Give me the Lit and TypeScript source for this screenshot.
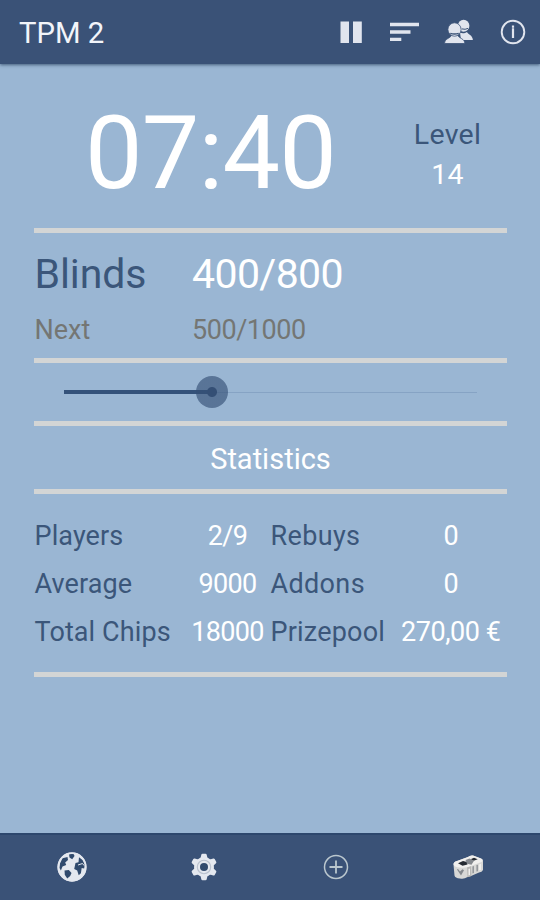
import { LitElement, html, css, svg } from "lit";
import { customElement, property } from "lit/decorators.js";

const icons = {
  pause: svg`<path fill="#e1e5ee" d="M5.5 5.5h8.500v21.500H5.500zM18 5.500h8.800v21.500H18z"/>`,
  sort: svg`<g fill="#e1e5ee"><path d="M1 6.800h29v3.400H1zM1 14.200h20.500v3.600H1zM1 21.700h11.300v3.400H1z"/></g>`,
  people: svg`
    <g fill="#e1e5ee">
      <ellipse cx="20.600" cy="9.800" rx="5.800" ry="6"/>
      <path d="M17 16.500c2 1 5 .8 7-.6.7 2.600 5.600 2.700 5.900 8.100H18z"/>
    </g>
    <g fill="#e1e5ee" stroke="#3a5277" stroke-width=".8">
      <path d="M1.500 27.500c.3-5 5.600-5.100 7.100-8.200h6c1.500 3.100 7 3.200 7.300 8.200z"/>
      <ellipse cx="11.500" cy="13.500" rx="6.600" ry="6.700"/>
    </g>
    <path d="M7.300 17.300q4.200 1.300 8.400 0" fill="none" stroke="#3a5277" stroke-width="1.400"/>
    <path d="M18.800 12.900q3.500 1 6.200-.5" fill="none" stroke="#3a5277" stroke-width="1"/>`,
  info: svg`<g fill="none" stroke="#e1e5ee">
      <circle cx="16" cy="16" r="11.300" stroke-width="1.900"/>
      <path stroke-width="2.200" d="M16 9.500v2.200M16 12.300v9.700"/>
    </g>`,
  globe: svg`
    <circle cx="16" cy="16" r="14.400" fill="#e4e8ef"/>
    <g fill="#304a6d">
      <path d="M13 3.200l4.500-.7 1 2.500-2.300 3.200-2.700-1.700z"/>
      <path d="M4 12.500l2.500-5.200 5-1.300.5 3-2.800 2.400 1 2.700-3.700 1.300-1.600 4.200L3.500 17z"/>
      <path d="M8.500 19.500l4.300-.6 2.700 3-1.300 3.200-3 2.400-2.400-3.800z"/>
      <path d="M19.500 12l3-.8.500-5 3.500 2.800 2.200 4.500-.5 4-2.500-.5-.8 5.200-2.200 2-1.500-4.800-3-1.400z"/>
    </g>
    <path d="M22 14l4.500-1.500 1.500 2" fill="none" stroke="#e4e8ef" stroke-width="1"/>
    <circle cx="16" cy="16" r="13.800" fill="none" stroke="#e4e8ef" stroke-width="1.700"/>`,
  gear: svg`
    <g fill="#e4e8ef">
      <circle cx="16" cy="16" r="10"/>
      ${[0, 60, 120, 180, 240, 300].map(
        (a) => svg`<path transform="rotate(${a} 16 16)" d="M12.300 8l1-4.300q.2-.9 1.200-.9h3q1 0 1.200.9l1 4.300z"/>`
      )}
    </g>
    <circle cx="16" cy="16" r="6.700" fill="none" stroke="#b9c1ce" stroke-width="1.100"/>
    <circle cx="16" cy="16" r="4" fill="#304a6d"/>`,
  plus: svg`<g fill="none" stroke="#bac7ce">
      <circle cx="16" cy="16" r="11.500" stroke-width="1.500"/>
      <path stroke-width="1.800" d="M16 9.500v13M9.500 16h13"/>
    </g>`,
  chips: svg`
    <path fill="#d8d8d6" d="M1.500 13.500Q1.500 11 5 10L16 6Q18 4 21 4.500L29 7.500Q31 8 31 10V19Q30 21 27 21.500L19 25 15.500 26Q12 28.500 8 27.500 3 27 2.500 24.500z"/>
    <path fill="#b8b8b6" d="M15 16l4-1 .5 10-4 1.200z"/>
    <path fill="#f1f0ee" d="M1.500 13.200Q1.500 11 5 10L16 6Q18 4 21 4.500L29 7.500Q32 9 29.500 11L19 15Q14 17.500 8 16.500 2 16 1.500 13.200z"/>
    <path fill="#252a31" d="M6 12.300l5-2.300 4 1 .5 2.500-5 1.200zM18.500 8.200l3.500-1.500 3.700 1.500-4 1.600z"/>
    <path fill="#85898e" d="M13.500 9l4-1.500 4.500 2.300-2.500 4-4.500-1z"/>
    <path fill="#85898e" d="M6 18l2 2.500 2.500-2.300 1.500 1-3 5.300-4-6zM20.500 15.500l1.300-.4v7l-1.300.5zM24.500 14l1.300-.3v6.500l-1.300.4z"/>
    <path fill="#f1f0ee" d="M16.500 18l1.500-.6v6.500l-1.500.6zM27 13.500l2-.7v6l-2 .8z"/>`,
};

type IconName = keyof typeof icons;

@customElement("tpm-icon")
export class TpmIcon extends LitElement {
  @property() name: IconName = "pause";
  static styles = css`
    :host { display: block; width: 32px; height: 32px; }
    svg { display: block; width: 100%; height: 100%; }
  `;
  render() {
    return html`<svg viewBox="0 0 32 32" aria-hidden="true">${icons[this.name]}</svg>`;
  }
}

@customElement("tpm-slider")
export class TpmSlider extends LitElement {
  @property({ type: Number }) value = 0;
  static styles = css`
    :host { display: flex; align-items: center; height: 58px; padding: 0 30px 0 29.5px; }
    .track { position: relative; flex: 1; height: 1px; background: #86a3c4; }
    .fill { position: absolute; left: 0; top: -1.5px; height: 4px; background: #34527a; }
    .thumb {
      position: absolute; top: 0.5px; width: 32px; height: 32px; border-radius: 50%;
      transform: translate(-50%, -50%);
      background: radial-gradient(circle, #344f75 4.5px, rgba(52, 79, 117, 0.64) 5.5px);
    }
  `;
  render() {
    return html`<div class="track">
      <div class="fill" style="width:${this.value}%"></div>
      <div class="thumb" style="left:${this.value}%"></div>
    </div>`;
  }
}

const stats = [
  ["Players", "2/9", "Rebuys", "0"],
  ["Average", "9000", "Addons", "0"],
  ["Total Chips", "18000", "Prizepool", "270,00 €"],
];

@customElement("app-root")
export class AppRoot extends LitElement {
  static styles = css`
    :host {
      display: flex; flex-direction: column; height: 900px; overflow: hidden;
      background: #9ab6d3; color: #fff; font-family: Roboto, sans-serif;
    }
    header {
      display: flex; align-items: center; box-sizing: border-box; height: 64px; flex: none;
      padding: 0 11px 0 19px; background: #3a5277;
      box-shadow: 0 1px 3px rgba(40, 65, 95, 0.75);
    }
    h1 { flex: 1; margin: 1px 0 0; font-size: 29.3px; font-weight: 400; line-height: 36px; color: #f2f5fa; }
    .actions { display: flex; gap: 22px; }
    main { flex: 1; padding: 0 33px 0 34px; }
    .label { color: #3b567a; }
    .clock { display: flex; height: 163.5px; }
    .time {
      width: 353px; text-align: center; font-size: 102.5px; line-height: 120px;
      letter-spacing: -0.8px; padding-top: 29px; box-sizing: border-box;
    }
    .level { flex: 1; text-align: center; font-size: 28.5px; line-height: 40px; padding: 51px 0 0 1px; letter-spacing: 0.3px; }
    hr { margin: 0; border: 0; height: 5px; background: #d3d5d5; }
    .blinds {
      display: grid; grid-template-columns: 157.5px 1fr; height: 125.5px;
      grid-template-rows: 75px 36px; align-content: start; padding: 4px 0 0 0.5px; box-sizing: border-box;
    }
    .now { font-size: 41px; line-height: 74px; letter-spacing: -0.1px; }
    .now:not(.label) { letter-spacing: -0.6px; }
    .next { font-size: 27px; line-height: 37px; color: #747674; letter-spacing: -0.45px; }
    .next:nth-child(3) { letter-spacing: 0; }
    h2 { margin: 0; height: 63px; font-size: 29px; font-weight: 400; line-height: 66px; text-align: center; }
    .stats {
      display: grid; grid-template-columns: 154px 82px 125px 1fr; grid-auto-rows: 48px;
      height: 178px; padding: 19px 0 0 0.5px; box-sizing: border-box;
      font-size: 27px; line-height: 47px; white-space: nowrap;
    }
    .stats .label { letter-spacing: 0.1px; }
    .stats .label:nth-child(4n + 3) { letter-spacing: 0.35px; }
    .stats .label:nth-child(11) { letter-spacing: 0.2px; }
    .value { text-align: center; letter-spacing: -0.65px; padding-right: 1px; }
    .value:nth-child(4n + 2) { padding-right: 4px; }
    .value:last-child { letter-spacing: -0.45px; }
    footer {
      display: flex; align-items: center; justify-content: space-around; flex: none; height: 67px;
      padding: 0 6px 2px; box-sizing: border-box; background: #3a5277; border-top: 2px solid #2d476d;
    }
  `;
  render() {
    return html`
      <header>
        <h1>TPM 2</h1>
        <div class="actions">
          <tpm-icon name="pause"></tpm-icon>
          <tpm-icon name="sort"></tpm-icon>
          <tpm-icon name="people"></tpm-icon>
          <tpm-icon name="info"></tpm-icon>
        </div>
      </header>
      <main>
        <section class="clock">
          <div class="time">07:40</div>
          <div class="level"><div class="label">Level</div><div>14</div></div>
        </section>
        <hr />
        <section class="blinds">
          <span class="now label">Blinds</span><span class="now">400/800</span>
          <span class="next">Next</span><span class="next">500/1000</span>
        </section>
        <hr />
        <tpm-slider value="36"></tpm-slider>
        <hr />
        <h2>Statistics</h2>
        <hr />
        <section class="stats">
          ${stats.map((row) =>
            row.map((cell, i) => html`<span class=${i % 2 ? "value" : "label"}>${cell}</span>`)
          )}
        </section>
        <hr />
      </main>
      <footer>
        <tpm-icon name="globe"></tpm-icon>
        <tpm-icon name="gear"></tpm-icon>
        <tpm-icon name="plus"></tpm-icon>
        <tpm-icon name="chips"></tpm-icon>
      </footer>
    `;
  }
}
